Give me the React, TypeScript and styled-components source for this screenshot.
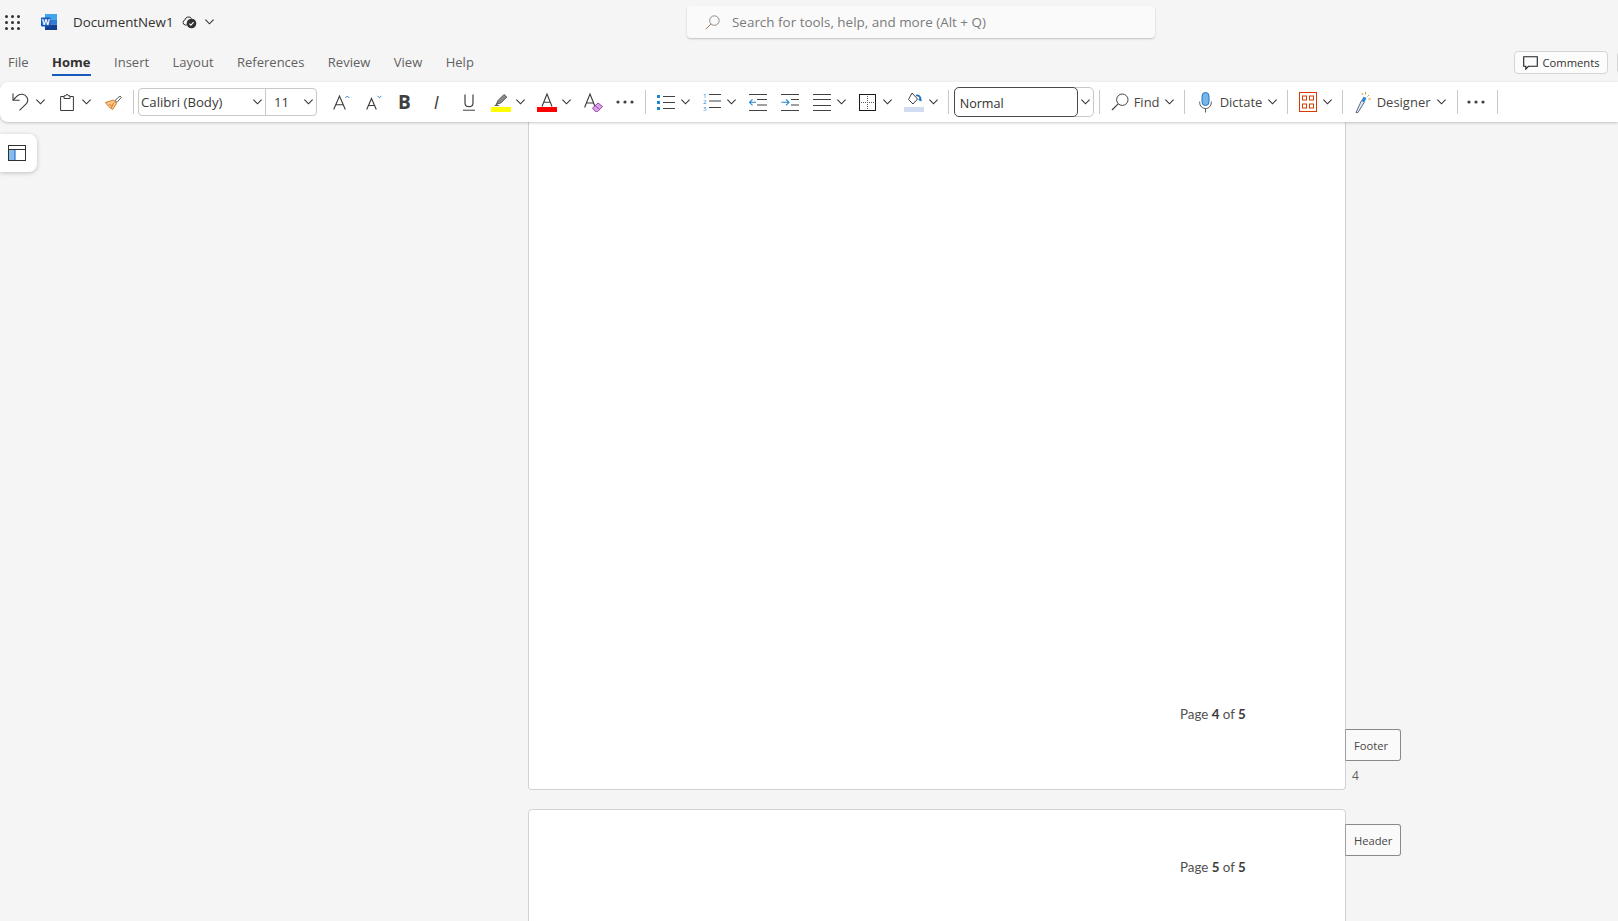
import { ReactNode } from "react";
import styled, { createGlobalStyle } from "styled-components";

const GlobalStyle = createGlobalStyle`
  html, body {
    margin: 0;
    height: 100%;
    overflow: hidden;
    background-color: #f5f5f5;
    font-family: "Open Sans", "Noto Sans", sans-serif;
  }
  * {
    box-sizing: border-box;
  }
`;

const Page = styled.div`
  width: 1618px;
  height: 921px;
  display: flex;
  flex-direction: column;
  position: relative;
  overflow: hidden;
  background-color: #f5f5f5;
`;

const TitleBar = styled.div`
  height: 44px;
  flex-shrink: 0;
  display: flex;
  align-items: center;
  position: relative;
`;

const Slot = styled.div<{ $ml?: number }>`
  display: flex;
  align-items: center;
  justify-content: center;
  flex-shrink: 0;
  margin-left: ${(p) => p.$ml ?? 0}px;
`;

const DocName = styled.div`
  margin-left: 16px;
  width: 99px;
  font-size: 13.35px;
  color: #323130;
  white-space: nowrap;
`;

const SearchBox = styled.div`
  position: absolute;
  left: 687px;
  top: 6px;
  width: 468px;
  height: 32px;
  display: flex;
  align-items: center;
  padding-left: 18px;
  background-color: #fafafa;
  border-radius: 4px;
  box-shadow: 0 1px 2px rgba(0, 0, 0, 0.22);
`;

const SearchText = styled.span`
  margin-left: 12px;
  font-size: 13.45px;
  color: #7a7a7a;
  white-space: nowrap;
`;

const TabRow = styled.div`
  height: 38px;
  flex-shrink: 0;
  display: flex;
  align-items: flex-start;
  padding: 8px 0 0 8px;
  gap: 23.5px;
`;

const Tab = styled.div<{ $active?: boolean }>`
  height: 24px;
  font-size: 13px;
  line-height: 20px;
  color: ${(p) => (p.$active ? "#323130" : "#616161")};
  font-weight: ${(p) => (p.$active ? 700 : 400)};
  border-bottom: 2px solid ${(p) => (p.$active ? "#185abd" : "transparent")};
  white-space: nowrap;
`;

const CommentsButton = styled.div`
  margin-left: auto;
  margin-top: -1px;
  width: 94px;
  height: 23px;
  flex-shrink: 0;
  display: flex;
  align-items: center;
  justify-content: center;
  gap: 5px;
  background-color: #fcfcfc;
  border: 1px solid #d4d4d4;
  border-radius: 4px;
  font-size: 11.2px;
  color: #323130;
`;

const ClippedButton = styled.div`
  margin: -1px -9px 0 -14.5px;
  width: 10px;
  height: 23px;
  flex-shrink: 0;
  border: 1px solid #d4d4d4;
  border-radius: 4px 0 0 4px;
`;

const Ribbon = styled.div`
  height: 40px;
  flex-shrink: 0;
  display: flex;
  align-items: center;
  background-color: #ffffff;
  border-radius: 8px 0 0 8px;
  box-shadow: 0 1px 3px rgba(0, 0, 0, 0.22);
  position: relative;
  z-index: 2;
`;

const Separator = styled.div<{ $ml: number }>`
  width: 1px;
  height: 24px;
  flex-shrink: 0;
  margin-left: ${(p) => p.$ml}px;
  background-color: #c8c8c8;
`;

const ComboGroup = styled.div`
  width: 179px;
  height: 28px;
  margin-left: 4px;
  flex-shrink: 0;
  display: flex;
  border: 1px solid #c8c8c8;
  border-radius: 4px;
`;

const ComboPart = styled.div<{ $w: number; $pl: number; $divider?: boolean }>`
  width: ${(p) => p.$w}px;
  display: flex;
  align-items: center;
  justify-content: space-between;
  padding: 0 3px 0 ${(p) => p.$pl}px;
  font-size: 13.2px;
  color: #3b3a39;
  border-right: ${(p) => (p.$divider ? "1px solid #c8c8c8" : "none")};
  white-space: nowrap;
`;

const StyleCombo = styled.div`
  width: 140px;
  height: 30px;
  margin-left: 5px;
  flex-shrink: 0;
  display: flex;
  border: 1px solid #c8c8c8;
  border-radius: 5px;
`;

const StyleInput = styled.div`
  width: 124px;
  margin: -1px 0 -1px -1px;
  display: flex;
  align-items: flex-end;
  padding: 0 0 4px 5px;
  background-color: #ffffff;
  border: 1px solid #4a4a4a;
  border-radius: 5px;
  font-size: 12.6px;
  color: #323130;
`;

const StyleArrow = styled.div`
  flex: 1;
  display: flex;
  align-items: center;
  justify-content: center;
`;

const Label = styled.span<{ $ml: number; $w: number }>`
  width: ${(p) => p.$w}px;
  margin-left: ${(p) => p.$ml}px;
  flex-shrink: 0;
  font-size: 13px;
  color: #484644;
  white-space: nowrap;
`;

const Workspace = styled.div`
  flex: 1;
  min-height: 0;
  padding-left: 528px;
  position: relative;
  overflow: hidden;
`;

const PanelToggle = styled.div`
  position: absolute;
  left: 0;
  top: 12px;
  width: 37px;
  height: 38px;
  display: flex;
  align-items: center;
  justify-content: center;
  padding-right: 3px;
  background-color: #ffffff;
  border-radius: 0 8px 8px 0;
  box-shadow: 0 1px 4px rgba(0, 0, 0, 0.22);
`;

const Sheet = styled.div<{ $h: number; $first?: boolean }>`
  width: 818px;
  height: ${(p) => p.$h}px;
  margin-top: ${(p) => (p.$first ? 0 : 19)}px;
  padding-left: 651px;
  display: flex;
  flex-direction: column;
  justify-content: ${(p) => (p.$first ? "flex-end" : "flex-start")};
  padding-bottom: ${(p) => (p.$first ? 67 : 0)}px;
  padding-top: ${(p) => (p.$first ? 0 : 49)}px;
  position: relative;
  background-color: #ffffff;
  border: 1px solid #d2d2d2;
  border-top-width: ${(p) => (p.$first ? 0 : 1)}px;
  border-radius: ${(p) => (p.$first ? "0 0 4px 4px" : "4px 4px 0 0")};
`;

const PageLine = styled.div`
  font-family: "Lato", "Open Sans", sans-serif;
  font-size: 13.3px;
  line-height: 16px;
  color: #505050;
  white-space: nowrap;

  b {
    font-weight: 700;
    color: #3a3a3a;
  }
`;

const SideTag = styled.div<{ $top?: number; $bottom?: number }>`
  position: absolute;
  left: 100%;
  top: ${(p) => (p.$top !== undefined ? `${p.$top}px` : "auto")};
  bottom: ${(p) => (p.$bottom !== undefined ? `${p.$bottom}px` : "auto")};
  width: 56px;
  height: 32px;
  padding-left: 8px;
  display: flex;
  align-items: center;
  background-color: #fafafa;
  border: 1px solid #8a8a8a;
  border-left-color: #a0a0a0;
  border-radius: 0 3px 3px 0;
  font-size: 11.2px;
  color: #484644;
`;

const PageNumber = styled.div`
  position: absolute;
  left: 100%;
  margin-left: 7px;
  bottom: 5px;
  font-size: 12px;
  color: #605e5c;
`;

const Svg = ({ w, h, children }: { w: number; h: number; children: ReactNode }) => (
  <svg width={w} height={h} viewBox={`0 0 ${w} ${h}`} fill="none" style={{ display: "block" }}>
    {children}
  </svg>
);

const Chevron = () => (
  <Svg w={9} h={6}>
    <path d="M.4.7 4.5 4.8 8.6.7" stroke="#323130" strokeWidth={1.1} />
  </Svg>
);

const Waffle = () => (
  <Svg w={15} h={15}>
    {[1.5, 7.5, 13.5].map((y) =>
      [1.5, 7.5, 13.5].map((x) => <circle key={`${x}-${y}`} cx={x} cy={y} r={1.5} fill="#323130" />)
    )}
  </Svg>
);

const WordLogo = () => (
  <Svg w={16} h={16}>
    <rect x={4} y={0} width={12} height={5.4} fill="#41a5ee" />
    <rect x={4} y={5.4} width={12} height={5.3} fill="#2b7cd3" />
    <rect x={4} y={10.7} width={12} height={5.3} fill="#103f91" />
    <rect x={0} y={3.5} width={9.5} height={9} rx={0.8} fill="#185abd" />
    <text x={4.75} y={11} textAnchor="middle" fontSize={8} fontWeight={700} fill="#fff" fontFamily="Open Sans">
      W
    </text>
  </Svg>
);

const CloudCheck = () => (
  <Svg w={15} h={14}>
    <path d="M5 10H3.4A2.6 2.6 0 0 1 3 4.9 3.6 3.6 0 0 1 9.6 3.6" stroke="#323130" />
    <circle cx={9.5} cy={8.5} r={4.8} fill="#323130" />
    <path d="m7.4 8.6 1.5 1.5 2.7-2.9" stroke="#fff" strokeWidth={1.1} />
  </Svg>
);

const SearchGlyph = ({ color, handle, size }: { color: string; handle: string; size: number }) => (
  <svg width={size} height={size} viewBox="0 0 18 18" fill="none" style={{ display: "block" }}>
    <circle cx={11.3} cy={6.7} r={5.7} stroke={color} />
    <path d="M7.2 10.8 1 17" stroke={handle} strokeWidth={1.2} />
  </svg>
);

const CommentGlyph = () => (
  <Svg w={15} h={14}>
    <path d="M.7.7h13.6v9.6H5.4l-2.6 2.8v-2.8H.7z" stroke="#1f1f1f" strokeWidth={1.1} />
  </Svg>
);

const Undo = () => (
  <Svg w={18} h={18}>
    <path d="M1 .5v6.7h6.7" stroke="#3b3a39" strokeWidth={1.1} />
    <path d="M1.2 7 5 3.2a6.3 6.3 0 0 1 9.9 1.1c1.4 2.4.9 5-1 6.8L7.5 17.4" stroke="#3b3a39" strokeWidth={1.1} />
  </Svg>
);

const Clipboard = () => (
  <Svg w={14} h={17}>
    <path d="M4 2.5H.6v14h12.8v-14H10" stroke="#3b3a39" />
    <path d="M4 4.5V1.8h1.7a1.3 1.3 0 0 1 2.6 0H10v2.7z" stroke="#3b3a39" />
  </Svg>
);

const Brush = () => (
  <Svg w={17} h={15}>
    <path d="M.5 7.5 8.5 5l3 3.5L7.5 14.5C5 13 2.5 10.5.5 7.5z" fill="#fbc78f" stroke="#d67b1c" />
    <path d="m4 9.5 2.5 1M6 13l1.5-2.5M9 7.5 7 11" stroke="#d67b1c" />
    <path d="m10 5.5 5-4.5 1.3 1.4-4.3 5z" fill="#fff" stroke="#605e5c" />
  </Svg>
);

const GrowFont = ({ shrink }: { shrink?: boolean }) => (
  <Svg w={shrink ? 16 : 17} h={15}>
    <path
      d={shrink ? "M.7 14.5 5.5 3.5l4.8 11M2.4 10.5h6.2" : "M.7 14.5 6.5 1l5.8 13.5M2.8 9.8h7.4"}
      stroke="#3b3a39"
      strokeWidth={1.1}
    />
    <path d={shrink ? "m11.5.8 2 2 2-2" : "m12.3 3 2-2 2 2"} stroke="#2b88d8" />
  </Svg>
);

const BoldText = styled.span`
  font-family: "Open Sans", sans-serif;
  font-size: 19px;
  font-weight: 700;
  line-height: 18px;
  color: #404040;
`;

const ItalicText = styled.span`
  font-family: "Open Sans", sans-serif;
  font-size: 18px;
  font-style: italic;
  line-height: 18px;
  color: #404040;
`;

const Underline = () => (
  <Svg w={12} h={17}>
    <path d="M2 .5v8.2c0 2.6 1.4 4 4 4s4-1.4 4-4V.5" stroke="#404040" strokeWidth={1.2} />
    <path d="M0 16.2h12" stroke="#404040" />
  </Svg>
);

const Highlight = () => (
  <Svg w={20} h={19}>
    <path d="m5.5 11 1.5-3.5 6-6 2.8 2.5-6 6z" fill="#8a8a8a" stroke="#5c5c5c" />
    <path d="M3 13h5.5L5.5 10.8z" fill="#5c5c5c" />
    <rect y={14} width={20} height={5} fill="#ffff00" />
  </Svg>
);

const FontColor = () => (
  <Svg w={20} h={19}>
    <path d="M5 13.5 10 1l5 12.5M6.8 9.2h6.4" stroke="#3b3a39" strokeWidth={1.1} />
    <rect y={14} width={20} height={5} fill="#ff0000" />
  </Svg>
);

const ClearFormat = () => (
  <Svg w={19} h={19}>
    <path d="M.6 14.5 6 1l5.4 13.5M2.4 10h7.2" stroke="#3b3a39" strokeWidth={1.1} />
    <path d="m8.5 15 5.5-5 4.5 3.5-5 5.2h-2z" fill="#d9a6e4" stroke="#a23fb8" />
    <path d="m11 12.5 4.5 3.8" stroke="#a23fb8" />
  </Svg>
);

const MoreDots = () => (
  <Svg w={18} h={4}>
    <circle cx={2} cy={2} r={1.6} fill="#404040" />
    <circle cx={9} cy={2} r={1.6} fill="#404040" />
    <circle cx={16} cy={2} r={1.6} fill="#404040" />
  </Svg>
);

const Bullets = () => (
  <Svg w={18} h={17}>
    {[1, 7, 13].map((y) => (
      <g key={y}>
        <rect y={y} width={3} height={3} fill="#1f86d0" />
        <path d={`M6 ${y + 1.5}h12`} stroke="#424242" />
      </g>
    ))}
  </Svg>
);

const Numbered = () => (
  <svg width={18} height={22} viewBox="0 0 18 22" fill="none" style={{ display: "block" }}>
    <text x={0} y={6.6} fontSize={6} fill="#1f86d0" fontFamily="Open Sans">1</text>
    <text x={0} y={13.2} fontSize={6} fill="#1f86d0" fontFamily="Open Sans">2</text>
    <text x={0} y={19.8} fontSize={6} fill="#1f86d0" fontFamily="Open Sans">3</text>
    <path d="M6 3.5h12M6 10h12M6 16.5h12" stroke="#424242" />
  </svg>
);

const Indent = ({ flip }: { flip?: boolean }) => (
  <Svg w={18} h={17}>
    <path d={flip ? "M0 .5h18M8 5.5h10M8 11h10M0 16.5h18" : "M0 .5h18M10 5.5h8M10 11h8M0 16.5h18"} stroke="#424242" />
    <path
      d={flip ? "M7 8.3H.5M3.5 5.3l-3 3 3 3" : "M.5 8.3H8M5 5.3l3 3-3 3"}
      stroke="#1f86d0"
      strokeWidth={1.1}
    />
  </Svg>
);

const AlignLines = () => (
  <Svg w={18} h={17}>
    <path d="M0 .5h18M0 5.5h18M0 11.5h18M0 16.5h18" stroke="#424242" />
  </Svg>
);

const Borders = () => (
  <Svg w={17} h={17}>
    <rect x={0.5} y={0.5} width={16} height={16} stroke="#1b1a19" />
    <path d="M8.5 2v13M2 8.5h13" stroke="#605e5c" strokeDasharray="1 1" />
  </Svg>
);

const Shading = () => (
  <Svg w={20} h={20}>
    <path d="m8 1 5.5 6-4.5 5-4.5-4.5z" stroke="#424242" fill="#fff" />
    <path d="M12 3.5c2.5-.5 4.5.8 4.7 4.7l-2-1" stroke="#1a6fc4" strokeWidth={1.7} />
    <rect y={15} width={20} height={5} fill="#d0dcf1" />
  </Svg>
);

const Mic = () => (
  <Svg w={13} h={21}>
    <rect x={3} y={0.5} width={7} height={13} rx={3.5} fill="#74b5ea" stroke="#2a74c4" />
    <path d="M.7 9.5v1.3a5.8 5.8 0 0 0 11.6 0V9.5M6.5 16.5v4" stroke="#5c5c5c" />
  </Svg>
);

const GridPicker = () => (
  <Svg w={18} h={20}>
    <rect x={0.5} y={0.5} width={17} height={19} stroke="#d83b01" />
    <rect x={3.5} y={4} width={4} height={4} stroke="#d83b01" />
    <rect x={10.5} y={4} width={4} height={4} stroke="#d83b01" />
    <rect x={3.5} y={12} width={4} height={4} stroke="#d83b01" />
    <rect x={10.5} y={12} width={4} height={4} stroke="#d83b01" />
  </Svg>
);

const DesignerWand = () => (
  <Svg w={16} h={22}>
    <path d="M1 21.5 6.5 9.5l3 1.4L3 21.5z" fill="#dfe9f7" stroke="#5a6b85" />
    <path d="m6.5 9.5 2-3.8 3 1.4-2 3.8z" fill="#2b88d8" />
    <path d="M10.5 1v2.5M14 4l-1.6 1.6M15.8 8h-2.5M7 2l.8 1.8" stroke="#d89a2a" />
  </Svg>
);

const PanelIcon = () => (
  <Svg w={18} h={16}>
    <rect x={1} y={5} width={6} height={10} fill="#83bdee" />
    <rect x={0.5} y={0.5} width={17} height={15} stroke="#323130" />
    <path d="M0 4.5h18" stroke="#323130" />
    <path d="M7 5v10" stroke="#185abd" />
  </Svg>
);

const tabs = ["File", "Home", "Insert", "Layout", "References", "Review", "View", "Help"];

const App = () => {
  return (
    <Page>
      <GlobalStyle />
      <TitleBar>
        <Slot $ml={5}>
          <Waffle />
        </Slot>
        <Slot $ml={21}>
          <WordLogo />
        </Slot>
        <DocName>DocumentNew1</DocName>
        <Slot $ml={10}>
          <CloudCheck />
        </Slot>
        <Slot $ml={8}>
          <Chevron />
        </Slot>
        <SearchBox>
          <SearchGlyph color="#7a7a7a" handle="#a67c52" size={15} />
          <SearchText>Search for tools, help, and more (Alt + Q)</SearchText>
        </SearchBox>
      </TitleBar>

      <TabRow>
        {tabs.map((t) => (
          <Tab key={t} $active={t === "Home"}>
            {t}
          </Tab>
        ))}
        <CommentsButton>
          <CommentGlyph />
          Comments
        </CommentsButton>
        <ClippedButton />
      </TabRow>

      <Ribbon>
        <Slot $ml={12}><Undo /></Slot>
        <Slot $ml={6}><Chevron /></Slot>
        <Slot $ml={15}><Clipboard /></Slot>
        <Slot $ml={8}><Chevron /></Slot>
        <Slot $ml={14}><Brush /></Slot>
        <Separator $ml={11} />
        <ComboGroup>
          <ComboPart $w={127} $pl={2} $divider>
            Calibri (Body)
            <Chevron />
          </ComboPart>
          <ComboPart $w={50} $pl={8}>
            11
            <Chevron />
          </ComboPart>
        </ComboGroup>
        <Slot $ml={16}><GrowFont /></Slot>
        <Slot $ml={16}><GrowFont shrink /></Slot>
        <Slot $ml={16}><BoldText>B</BoldText></Slot>
        <Slot $ml={23}><ItalicText>I</ItalicText></Slot>
        <Slot $ml={24}><Underline /></Slot>
        <Slot $ml={16}><Highlight /></Slot>
        <Slot $ml={5}><Chevron /></Slot>
        <Slot $ml={12}><FontColor /></Slot>
        <Slot $ml={5}><Chevron /></Slot>
        <Slot $ml={13}><ClearFormat /></Slot>
        <Slot $ml={13}><MoreDots /></Slot>
        <Separator $ml={11} />
        <Slot $ml={11}><Bullets /></Slot>
        <Slot $ml={6}><Chevron /></Slot>
        <Slot $ml={13}><Numbered /></Slot>
        <Slot $ml={6}><Chevron /></Slot>
        <Slot $ml={13}><Indent flip /></Slot>
        <Slot $ml={14}><Indent /></Slot>
        <Slot $ml={14}><AlignLines /></Slot>
        <Slot $ml={6}><Chevron /></Slot>
        <Slot $ml={13}><Borders /></Slot>
        <Slot $ml={7}><Chevron /></Slot>
        <Slot $ml={12}><Shading /></Slot>
        <Slot $ml={5}><Chevron /></Slot>
        <Separator $ml={10} />
        <StyleCombo>
          <StyleInput>Normal</StyleInput>
          <StyleArrow>
            <Chevron />
          </StyleArrow>
        </StyleCombo>
        <Separator $ml={5} />
        <Slot $ml={11}><SearchGlyph color="#424242" handle="#424242" size={18} /></Slot>
        <Label $ml={5} $w={26}>Find</Label>
        <Slot $ml={5}><Chevron /></Slot>
        <Separator $ml={10} />
        <Slot $ml={14}><Mic /></Slot>
        <Label $ml={8} $w={43}>Dictate</Label>
        <Slot $ml={5}><Chevron /></Slot>
        <Separator $ml={10} />
        <Slot $ml={11}><GridPicker /></Slot>
        <Slot $ml={6}><Chevron /></Slot>
        <Separator $ml={10} />
        <Slot $ml={12}><DesignerWand /></Slot>
        <Label $ml={6} $w={55}>Designer</Label>
        <Slot $ml={5}><Chevron /></Slot>
        <Separator $ml={11} />
        <Slot $ml={9}><MoreDots /></Slot>
        <Separator $ml={12} />
      </Ribbon>

      <Workspace>
        <PanelToggle>
          <PanelIcon />
        </PanelToggle>
        <Sheet $first $h={668}>
          <PageLine>
            Page <b>4</b> of <b>5</b>
          </PageLine>
          <SideTag $bottom={28}>Footer</SideTag>
          <PageNumber>4</PageNumber>
        </Sheet>
        <Sheet $h={200}>
          <PageLine>
            Page <b>5</b> of <b>5</b>
          </PageLine>
          <SideTag $top={14}>Header</SideTag>
        </Sheet>
      </Workspace>
    </Page>
  );
};

export default App;
